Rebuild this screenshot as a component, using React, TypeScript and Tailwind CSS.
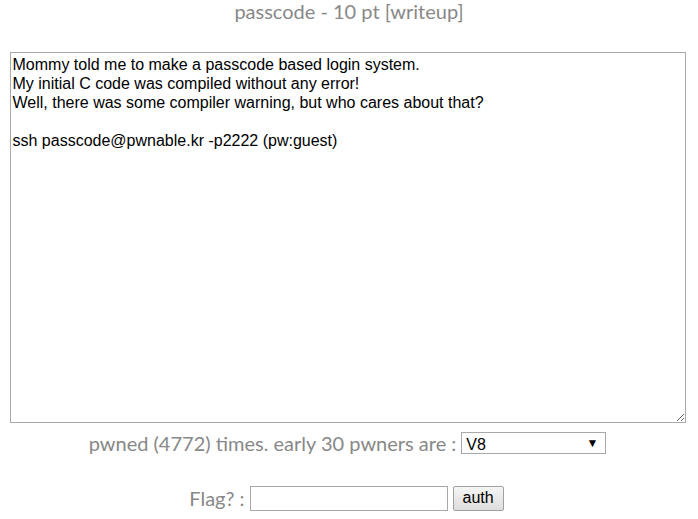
import type React from "react"

const description = `Mommy told me to make a passcode based login system.
My initial C code was compiled without any error!
Well, there was some compiler warning, but who cares about that?

ssh passcode@pwnable.kr -p2222 (pw:guest)`

const App: React.FC = () => {
  return (
    <div className="min-h-screen bg-white text-[#888888] font-['Lato','Open_Sans',sans-serif]">
      <div className="flex flex-col items-center">
        <h1 className="text-[20px] leading-[23px] h-[23px]">passcode - 10 pt [writeup]</h1>

        <textarea
          readOnly
          defaultValue={description}
          className="mt-[29px] mr-[3px] w-[676px] h-[371px] border border-[#a9a9a9] px-[2px] py-[2px] text-[16px] leading-[19px] text-black font-['Liberation_Sans',Arial,sans-serif] resize-y outline-none"
        />

        <div className="mt-[8px] pr-[3px] flex items-center gap-[5px] h-[24px]">
          <span className="text-[20px] leading-[24px]">pwned (4772) times. early 30 pwners are :</span>
          <div className="relative w-[145px] h-[22px]">
            <select className="appearance-none w-full h-full border border-[#a9a9a9] bg-white pl-[4px] text-[16px] text-black font-['Liberation_Sans',Arial,sans-serif] outline-none">
              <option>V8</option>
            </select>
            <span className="absolute right-[8px] top-[2px] text-[12px] text-black pointer-events-none">▼</span>
          </div>
        </div>

        <div className="mt-[30px] pr-[5px] flex items-center h-[26px]">
          <span className="text-[20px] leading-[24px] mr-[5px]">Flag? :</span>
          <input type="text" className="w-[198px] h-[25px] border border-[#a9a9a9] bg-white outline-none" />
          <button className="ml-[5px] h-[25px] px-[9px] border border-[#a0a0a0] rounded-[2px] bg-gradient-to-b from-[#f5f5f5] to-[#dddddd] text-[16px] text-black font-['Liberation_Sans',Arial,sans-serif] leading-[20px]">
            auth
          </button>
        </div>
      </div>
    </div>
  )
}

export default App
